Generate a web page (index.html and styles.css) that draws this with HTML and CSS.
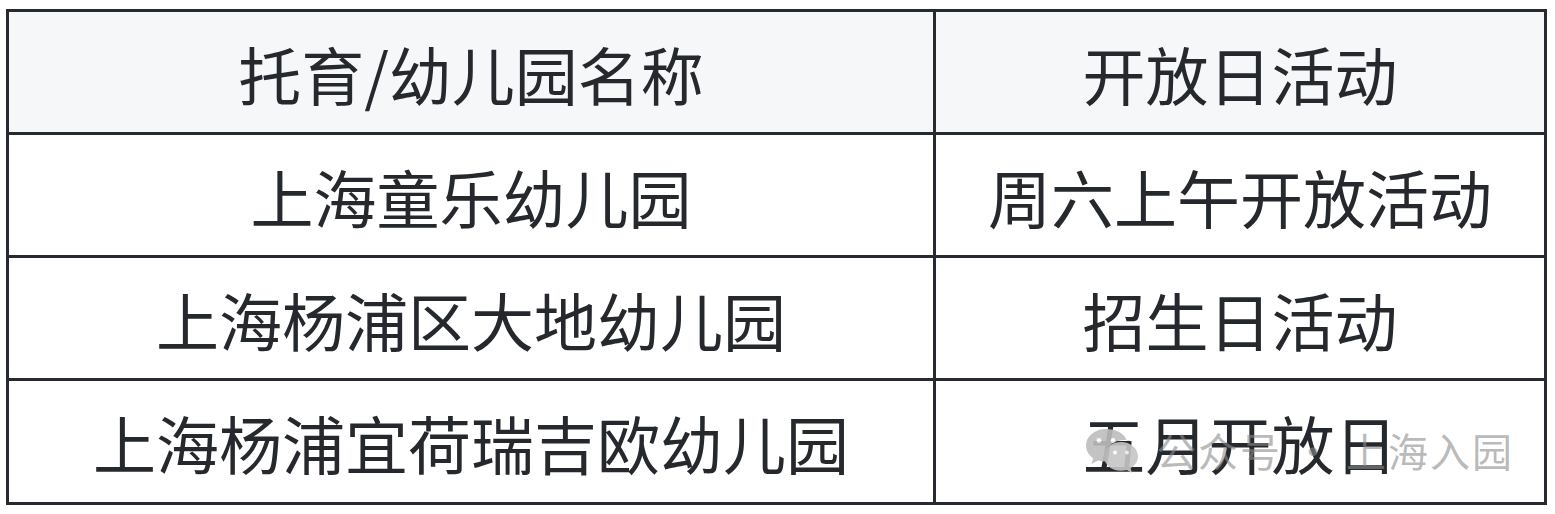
FILE: index.html
```html
<!DOCTYPE html>
<html lang="zh-CN">
<head>
<meta charset="utf-8">
<title>开放日活动</title>
<link rel="stylesheet" href="styles.css">
</head>
<body>
<div class="page">
  <div class="grid">
    <div class="cell head">托育/幼儿园名称</div>
    <div class="cell head">开放日活动</div>
    <div class="cell">上海童乐幼儿园</div>
    <div class="cell">周六上午开放活动</div>
    <div class="cell">上海杨浦区大地幼儿园</div>
    <div class="cell">招生日活动</div>
    <div class="cell">上海杨浦宜荷瑞吉欧幼儿园</div>
    <div class="cell">五月开放日</div>
  </div>
  <div class="watermark">
    <svg class="wm-icon" viewBox="0 0 56 46" width="56" height="46" aria-hidden="true">
      <path d="M22 2C10.4 2 2 9.6 2 18.6c0 5.2 2.8 9.6 7.2 12.6L7.4 37l6.6-3.6c2.4.7 5 1 7.6 1-.5-1.6-.8-3.2-.8-4.9C20.8 20.6 29.6 13 40.6 13c.6 0 1.200 0 1.8.1C40.6 6.6 32 2 22 2z" fill="#bdbdbd"/>
      <path d="M54 29.4c0-8-7.6-14.4-17-14.4s-17 6.4-17 14.4 7.6 14.4 17 14.4c2 0 3.9-.3 5.7-.8l5.3 2.9-1.4-4.8C50.9 38.5 54 34.2 54 29.4z" fill="#c6c6c6"/>
      <circle cx="15" cy="13.5" r="2.4" fill="#fff"/>
      <circle cx="29" cy="13.5" r="2.4" fill="#fff"/>
      <circle cx="31" cy="25.5" r="1.9" fill="#fff"/>
      <circle cx="43" cy="25.5" r="1.9" fill="#fff"/>
    </svg>
    <span class="wm-text">公众号 · 上海入园</span>
  </div>
</div>
</body>
</html>
```

FILE: styles.css
```css
html, body {
  margin: 0;
  padding: 0;
  background: #ffffff;
}

.page {
  position: relative;
  width: 1555px;
  height: 514px;
  padding: 9px 0 0 6px;
  box-sizing: border-box;
  font-family: "Noto Sans CJK SC", "Noto Sans", sans-serif;
}

.grid {
  display: grid;
  width: 1541px;
  grid-template-columns: 924px 1fr;
  grid-template-rows: 120px 120px 120px 121px;
  gap: 3px;
  padding: 3px;
  box-sizing: border-box;
  background: #272a30;
}

.cell {
  display: flex;
  align-items: center;
  justify-content: center;
  background: #ffffff;
  color: #25282d;
  font-size: 63px;
  line-height: 1;
  white-space: nowrap;
}

.cell.head {
  background: #f6f7f9;
}

.watermark {
  position: absolute;
  left: 1084px;
  top: 427px;
  display: flex;
  align-items: center;
  gap: 16px;
  pointer-events: none;
}

.wm-icon {
  display: block;
  opacity: 0.9;
}

.wm-text {
  font-size: 40px;
  line-height: 1;
  letter-spacing: 2px;
  color: rgba(140, 140, 140, 0.6);
  white-space: nowrap;
}
```
